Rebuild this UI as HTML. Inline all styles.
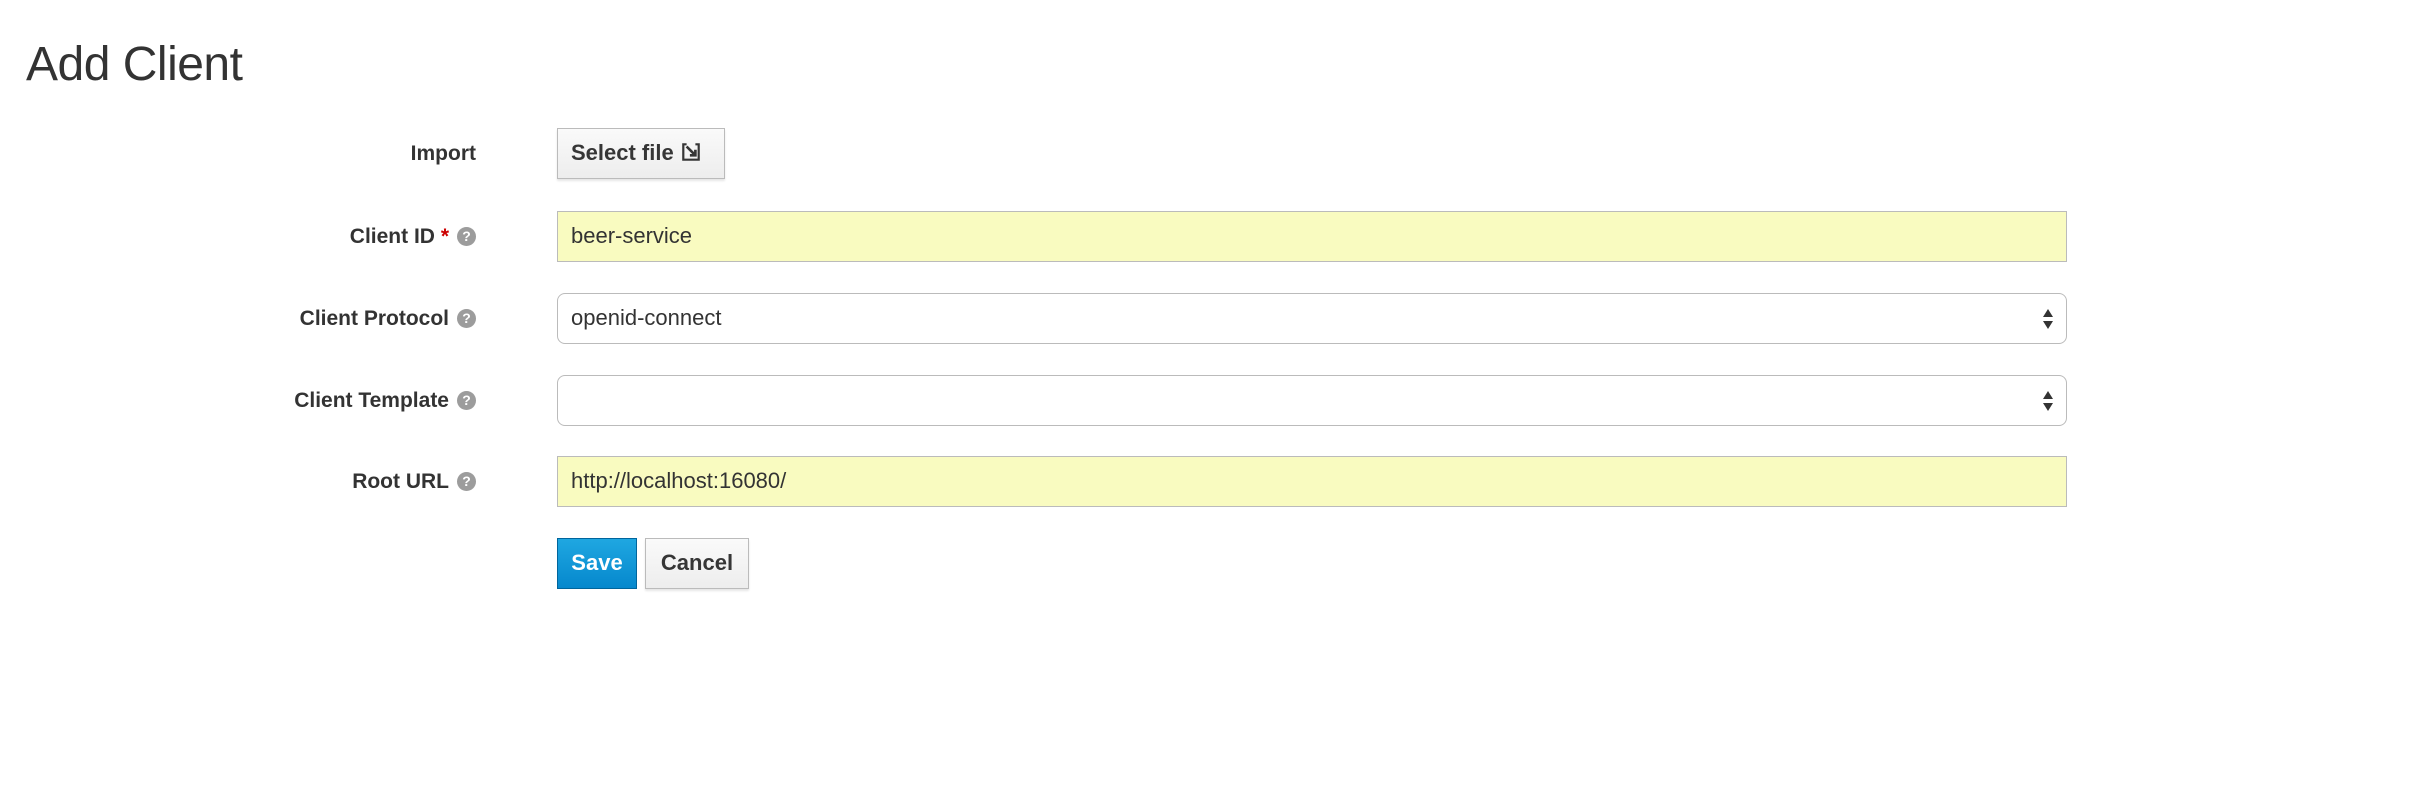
<!DOCTYPE html>
<html><head><style>
body{margin:0;width:2418px;height:792px;background:#fff;font-family:"Liberation Sans",sans-serif;color:#333;position:relative;overflow:hidden}
.a{position:absolute}
h1{position:absolute;left:26px;top:37px;margin:0;font-weight:normal;font-size:48px;color:#333;letter-spacing:-0.5px}
.lbl{position:absolute;right:1942px;font-weight:bold;font-size:21px;white-space:nowrap;display:flex;align-items:center;height:51px}
.q{display:inline-block;width:19px;height:19px;border-radius:50%;background:#9c9c9c;color:#fff;font-size:14px;line-height:19px;text-align:center;margin-left:8px;font-weight:bold}
.inp{position:absolute;left:557px;font-size:22px;line-height:48px;padding-left:13px;box-sizing:border-box;width:1510px;height:51px;border:1.5px solid #bbb}
.y{background:#f9fbc0}
.s{background:#fff;border-radius:8px}
.btn{position:absolute;top:538px;height:51px;box-sizing:border-box;font-size:22px;font-weight:bold;line-height:48px;text-align:center}
</style></head><body>
<h1>Add Client</h1>
<div class="lbl" style="top:128px">Import</div>
<div class="a" style="left:557px;top:128px;width:168px;height:51px;box-sizing:border-box;border:1.5px solid #bbb;background:linear-gradient(#fafafa,#ededed);box-shadow:0 2px 2px rgba(0,0,0,.1);font-size:22px;font-weight:bold;line-height:48px;padding-left:13px;color:#363636">Select file <svg width="22" height="22" viewBox="0 0 20 20" style="vertical-align:-3px"><path d="M2 2v16h16V2h-4v2h2v12H4V4h2V2z" fill="#363636"/><path d="M6 5l8 8M14 8v5H9" stroke="#363636" stroke-width="2.4" fill="none"/></svg></div>
<div class="lbl" style="top:211px">Client ID&nbsp;<span style="color:#c00">*</span><span class="q">?</span></div>
<div class="inp y" style="top:211px">beer-service</div>
<div class="lbl" style="top:293px">Client Protocol<span class="q">?</span></div>
<div class="inp s" style="top:293px">openid-connect<svg class="a" style="right:12px;top:14px" width="12" height="22" viewBox="0 0 12 22"><path d="M6 1L11 9H1z M6 21L11 13H1z" fill="#333"/></svg></div>
<div class="lbl" style="top:375px">Client Template<span class="q">?</span></div>
<div class="inp s" style="top:375px"><svg class="a" style="right:12px;top:14px" width="12" height="22" viewBox="0 0 12 22"><path d="M6 1L11 9H1z M6 21L11 13H1z" fill="#333"/></svg></div>
<div class="lbl" style="top:456px">Root URL<span class="q">?</span></div>
<div class="inp y" style="top:456px">http://localhost:16080/</div>
<div class="btn" style="left:557px;width:80px;background:linear-gradient(#1fa7e1,#0688cd);border:1.5px solid #00659c;color:#fff">Save</div>
<div class="btn" style="left:645px;width:104px;background:linear-gradient(#fafafa,#ededed);border:1.5px solid #bbb;color:#363636;box-shadow:0 2px 2px rgba(0,0,0,.1)">Cancel</div>
</body></html>
